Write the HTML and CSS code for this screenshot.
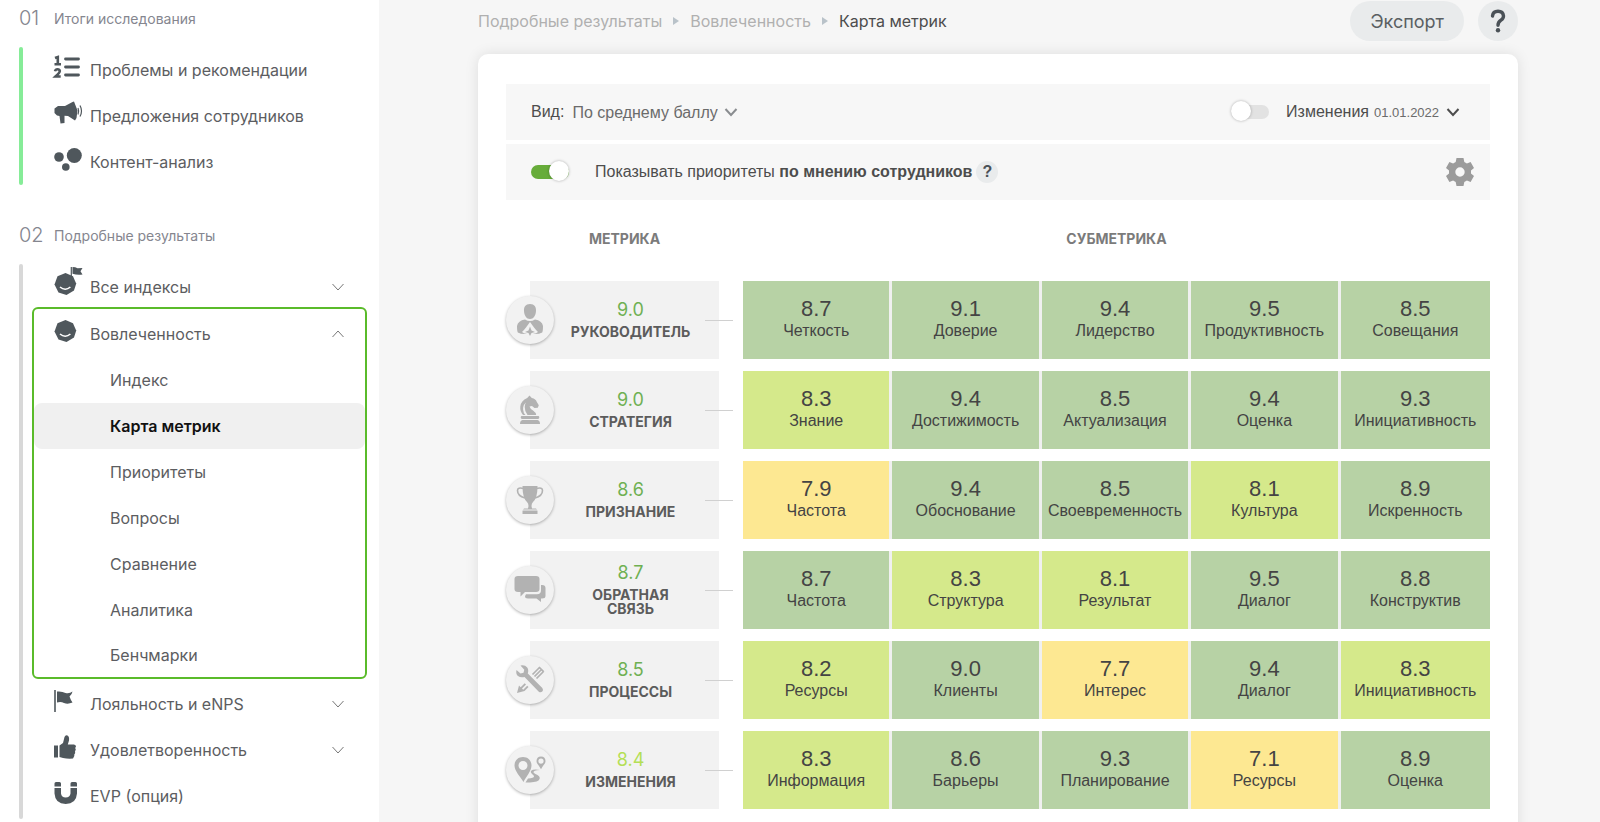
FILE: index.html
```html
<!DOCTYPE html>
<html lang="ru">
<head>
<meta charset="utf-8">
<meta name="viewport" content="width=device-width, initial-scale=1">
<title>Карта метрик</title>
<link rel="stylesheet" href="styles.css">
</head>
<body>
<svg class="defs" aria-hidden="true">
  <symbol id="chev" viewBox="0 0 14 14"><path d="M1.500 4l5.500 6 5.500-6" fill="none" stroke="currentColor"/></symbol>
  <symbol id="face" viewBox="0 0 28 28"><path d="M11.500 3l7.500 3.200 3.200 7.300-2.200 7-7.500 4.500-8-2.500L.5 14.500 3.500 6.200z" fill="currentColor"/><path d="M6 17q5.200 4.500 10.400 0" fill="none" stroke="#fff" stroke-width="1.600"/></symbol>
</svg>
<div class="app">
  <nav class="sidebar" aria-label="Разделы">
    <h2 class="group-title"><span class="group-no">01</span>Итоги исследования</h2>
    <div class="group">
      <div class="bar bar-green"></div>
      <div class="items">
        <a class="item" href="#"><svg class="icon" viewBox="0 0 28 28"><g stroke="currentColor" stroke-width="2.800" stroke-linecap="round"><path d="M11.500 6h13M11.500 14h13M11.500 22h13"/></g><g fill="none" stroke="currentColor" stroke-width="2.600"><path d="M1 5l2.800-1v7.500M.5 11.300h6.500"/><path d="M1 18.200q.5-2 2.500-2t2.300 1.700q0 1.500-4.300 5.600h5.200"/></g></svg>Проблемы и рекомендации</a>
        <a class="item" href="#"><svg class="icon" viewBox="0 0 28 28"><path d="M4 7h7l7.500-4 1.500-.5 3.500 9-1 7.500-1.500 2.500-7-4.500-3.500-.3V24l-4 .5L5.500 17 3 16.500.5 14V9.500z" fill="currentColor"/><path d="M24 9q1.300 3 0 6.500M26 6.500q3 5.500 0 11" fill="none" stroke="currentColor" stroke-width="1.200"/></svg>Предложения сотрудников</a>
        <a class="item" href="#"><svg class="icon" viewBox="0 0 28 28"><g fill="currentColor"><circle cx="5" cy="12" r="4.800"/><circle cx="20.300" cy="10.500" r="7.500"/><circle cx="11.800" cy="22" r="3.800"/></g></svg>Контент-анализ</a>
      </div>
    </div>
    <h2 class="group-title group-title-next"><span class="group-no">02</span>Подробные результаты</h2>
    <div class="group">
      <div class="bar"></div>
      <div class="items">
        <button class="item" type="button"><svg class="icon" viewBox="0 0 28 28"><use href="#face"/><path d="M17.300-3v10" stroke="currentColor" stroke-width="1.200"/><path d="M18.500-3q3 0 5 1.200l5-.2-2 3.200 2 3.300q-5 1-10-.8z" fill="currentColor"/></svg>Все индексы<svg class="chev"><use href="#chev"/></svg></button>
        <div class="open-group">
          <button class="item" type="button" aria-expanded="true"><svg class="icon" viewBox="0 0 28 28"><use href="#face"/></svg>Вовлеченность<svg class="chev chev-up"><use href="#chev"/></svg></button>
          <a class="sub" href="#">Индекс</a>
          <a class="sub sub-active" href="#" aria-current="page">Карта метрик</a>
          <a class="sub" href="#">Приоритеты</a>
          <a class="sub" href="#">Вопросы</a>
          <a class="sub" href="#">Сравнение</a>
          <a class="sub" href="#">Аналитика</a>
          <a class="sub" href="#">Бенчмарки</a>
        </div>
        <button class="item" type="button"><svg class="icon" viewBox="0 0 28 28"><path d="M1 3v22" stroke="currentColor" stroke-width="1.600"/><path d="M3 4.500q5-.5 8.500 1.500 4 1 7-1.500-.5 3-3 5 1 3 3 6-4.500 2-8.500.5-3-1.500-7-.5z" fill="currentColor"/></svg>Лояльность и eNPS<svg class="chev"><use href="#chev"/></svg></button>
        <button class="item" type="button"><svg class="icon" viewBox="0 0 28 28"><path d="M0 12.500h4v12H0zM5.500 12.500l3.500-2.500 1.500-6q1-2.500 3-1.500t1.500 5l-1.200 4H20q2 .5 2 2l-.8 1.500.6 1.500-.8 2 .2 1.500-.9 1.500v1.500l-1.300 2.500q-5 .5-10-.5l-3.500-1z" fill="currentColor"/></svg>Удовлетворенность<svg class="chev"><use href="#chev"/></svg></button>
        <a class="item" href="#"><svg class="icon" viewBox="0 0 28 28"><path d="M.5 4.500Q.5 3 2 3h3.500Q7 3 7 4.500v3H.5zM16.500 4.500q0-1.500 1.500-1.500h3.500Q23 3 23 4.500v3h-6.500zM.5 9H7v5.500q.5 4 4.700 4t4.800-4V9H23v5.500q-.8 10.500-11.300 10.500T.5 14.500z" fill="currentColor"/></svg>EVP (опция)</a>
      </div>
    </div>
  </nav>

  <main class="main">
    <header class="top">
      <nav class="crumbs" aria-label="Путь">
        <a href="#">Подробные результаты</a><svg class="crumb-arrow" viewBox="0 0 6 10"><path d="M0 1l6 4-6 4z" fill="#b9c2c9"/></svg>
        <a href="#">Вовлеченность</a><svg class="crumb-arrow" viewBox="0 0 6 10"><path d="M0 1l6 4-6 4z" fill="#b9c2c9"/></svg>
        <span class="crumb-now">Карта метрик</span>
      </nav>
      <button class="export" type="button">Экспорт</button>
      <button class="help" type="button" aria-label="Помощь"><svg viewBox="0 0 16 24"><path d="M2.500 7Q3 2.200 8 2.200T13.500 7q0 2.500-2.500 4.200-3 2-3 5" fill="none" stroke="currentColor" stroke-width="3.400" stroke-linecap="round"/><circle cx="8" cy="21.300" r="2.200" fill="currentColor"/></svg></button>
    </header>

    <section class="card">
      <div class="tool">
        <label class="view-label" for="view">Вид:</label>
        <span class="pick"><select id="view"><option>По среднему баллу</option></select><svg class="pick-chev pick-chev-soft"><use href="#chev"/></svg></span>
        <input class="switch push" type="checkbox" id="changes">
        <label class="changes-label" for="changes">Изменения</label>
        <span class="pick pick-date"><select aria-label="Дата"><option>01.01.2022</option></select><svg class="pick-chev"><use href="#chev"/></svg></span>
      </div>
      <div class="tool">
        <input class="switch" type="checkbox" id="prio" checked>
        <label class="prio-label" for="prio">Показывать приоритеты <b>по мнению сотрудников</b></label>
        <button class="hint" type="button">?</button>
        <button class="gear push" type="button" aria-label="Настройки"><svg viewBox="0 0 28 28"><path fill="currentColor" fill-rule="evenodd" d="M10.500 0h7l.8 4 2.600 1.500L24.600 4 28 10l-3 2.600v2.800L28 18l-3.400 6-3.700-1.500-2.600 1.500-.8 4h-7l-.8-4-2.600-1.500L3.400 24 0 18l3-2.600v-2.800L0 10l3.400-6 3.700 1.500L9.700 4zM14 9.300a4.700 4.700 0 1 0 0 9.400 4.700 4.700 0 0 0 0-9.400z"/></svg></button>
      </div>

      <table class="map">
        <colgroup><col class="col-metric"><col><col><col><col><col></colgroup>
        <thead><tr><th scope="col">МЕТРИКА</th><th scope="colgroup" colspan="5">СУБМЕТРИКА</th></tr></thead>
        <tbody>
          <tr>
            <th scope="row"><div class="metric"><span class="badge"><svg viewBox="0 0 32 32"><path fill="currentColor" d="M16 0c4.500 0 6.300 3 6 7-.3 4.500-2.500 8-6 8s-5.700-3.500-6-8c-.3-4 1.500-7 6-7zM11 15.500q5 3 10 0 7 1 8 6.500 0 5-.8 6.500-3 1.800-9.200 1.500 3.500-.5 5-2-2.500-2.500-4-4.500L16 18l-4 5.500Q10.500 25.500 8 28q1.500 1.500 5 2-6.200.3-9.200-1.500Q3 27 3 22q1-5.500 8-6.500zM16 22.500l1.500 4 3.500 1.500-3.500 1-1.500 3-1.500-3-3.500-1 3.500-1.500z"/></svg></span><span class="score">9.0</span>РУКОВОДИТЕЛЬ</div></th>
            <td class="g"><b>8.7</b>Четкость</td><td class="g"><b>9.1</b>Доверие</td><td class="g"><b>9.4</b>Лидерство</td><td class="g"><b>9.5</b>Продуктивность</td><td class="g"><b>8.5</b>Совещания</td>
          </tr>
          <tr>
            <th scope="row"><div class="metric"><span class="badge"><svg viewBox="0 0 32 32"><path fill="currentColor" d="M15.500 1.500l2.300 2.500q4 .8 5 4l2 3.200-1 2.500-3.300.3-2.500-2-2.500.5q.5 2 3.500 4t3.200 4.500H13.500q-3-4.500-2.800-8 .1-3 1.300-4.500-3.200 2.500-2.900 7 .2 3.500 2.400 5.500H9Q5.800 17 6.300 12.500 7 6.500 13.200 4zM7.500 22h17q.8.300.8 1.400t-1.300 1.500H8q-1.300-.3-1.300-1.500T7.500 22zM8.500 26h15q2.500.7 2.500 4H6q0-3.300 2.500-4z"/></svg></span><span class="score">9.0</span>СТРАТЕГИЯ</div></th>
            <td class="l"><b>8.3</b>Знание</td><td class="g"><b>9.4</b>Достижимость</td><td class="g"><b>8.5</b>Актуализация</td><td class="g"><b>9.4</b>Оценка</td><td class="g"><b>9.3</b>Инициативность</td>
          </tr>
          <tr>
            <th scope="row"><div class="metric"><span class="badge"><svg viewBox="0 0 32 32"><path fill="currentColor" d="M8.500 2h15q0 12-4.500 16-1.500 1.500-1.500 4l.5 2.500H22l1.500 2V30h-15v-3.500l1.500-2h4l.5-2.500q0-2.500-1.500-4Q8.500 14 8.500 2z"/><path fill="#f2f2f2" d="M8 25.500h16v1H8z"/><path fill="none" stroke="currentColor" stroke-width="1.600" d="M9.500 4.500Q3.500 3 3.500 6.500 3.500 12 11 14M22.500 4.500q6-1.500 6 2Q28.500 12 21 14"/></svg></span><span class="score">8.6</span>ПРИЗНАНИЕ</div></th>
            <td class="y"><b>7.9</b>Частота</td><td class="g"><b>9.4</b>Обоснование</td><td class="g"><b>8.5</b>Своевременность</td><td class="l"><b>8.1</b>Культура</td><td class="g"><b>8.9</b>Искренность</td>
          </tr>
          <tr>
            <th scope="row"><div class="metric"><span class="badge"><svg viewBox="0 0 32 32"><path fill="currentColor" d="M4 2h18q3.500 0 3.500 3v10q0 3-3.500 3H11l-4.500 4.500V18H4q-3.500 0-3.500-3V5Q.5 2 4 2zM27 11q4.500-.5 4.500 3v8q0 2.500-3.500 2.500h-1V28l-4.500-3.500H14q-3 0-3-2.200l1-2h11q4 0 4-4z"/></svg></span><span class="score">8.7</span>ОБРАТНАЯ<br>СВЯЗЬ</div></th>
            <td class="g"><b>8.7</b>Частота</td><td class="l"><b>8.3</b>Структура</td><td class="l"><b>8.1</b>Результат</td><td class="g"><b>9.5</b>Диалог</td><td class="g"><b>8.8</b>Конструктив</td>
          </tr>
          <tr>
            <th scope="row"><div class="metric"><span class="badge"><svg viewBox="0 0 32 32"><path fill="none" stroke="currentColor" stroke-width="1.700" d="M18.500 10.500l7-7M20.500 12.500l7-7M22.500 14.500l7-7M25 3l4.800 4.800"/><path fill="currentColor" d="M5 21.500L3 29l7.500-2 4-4-1.300-1.300-4 4-1.200-1.200 4-4-1.300-1.200-4 4z"/><path fill="currentColor" d="M6.500 1.500q4.500-.8 6.500 1.700t.8 6.300l14.500 14.500q1.500 2 0 3.500t-3.500.3L10.500 13Q6.500 14 4 12T2.500 6l4 3.500 3-.8.8-3z"/></svg></span><span class="score">8.5</span>ПРОЦЕССЫ</div></th>
            <td class="l"><b>8.2</b>Ресурсы</td><td class="g"><b>9.0</b>Клиенты</td><td class="y"><b>7.7</b>Интерес</td><td class="g"><b>9.4</b>Диалог</td><td class="l"><b>8.3</b>Инициативность</td>
          </tr>
          <tr>
            <th scope="row"><div class="metric"><span class="badge"><svg viewBox="0 0 32 32"><path fill="currentColor" fill-rule="evenodd" d="M9 3c5 0 8.500 3.500 8.500 8.500C17.500 17 12 23 9.500 28 6.500 23 .5 17 .5 11.500.5 6.500 4 3 9 3zM9 7a4.500 4.500 0 1 0 0 9 4.500 4.500 0 0 0 0-9zM27 2.500c3 0 4.500 2 4.500 4.700 0 2.500-3 4.800-4.500 8-1.500-3.200-4.500-5.500-4.500-8 0-2.700 1.500-4.700 4.500-4.700zM27 4.500a2.600 2.600 0 1 0 0 5.200 2.600 2.600 0 0 0 0-5.200z"/><path fill="currentColor" d="M26 16q-7 0-6.500 2.500 1 1 4 2.500 4 2.500 1 5.500-3 2-13 2l2.500-4q6-.5 6-2t-2-2.500q-3-3 1-4.200 3-.5 7 .2z"/></svg></span><span class="score score-lime">8.4</span>ИЗМЕНЕНИЯ</div></th>
            <td class="l"><b>8.3</b>Информация</td><td class="g"><b>8.6</b>Барьеры</td><td class="g"><b>9.3</b>Планирование</td><td class="y"><b>7.1</b>Ресурсы</td><td class="g"><b>8.9</b>Оценка</td>
          </tr>
        </tbody>
      </table>
    </section>
  </main>
</div>
</body>
</html>
```
FILE: styles.css
```css
* { box-sizing: border-box; }
body {
  margin: 0;
  background: #f6f6f6;
  color: #4d4d4d;
  font-family: "Liberation Sans", Arial, sans-serif;
  font-size: 16px;
}
button, select { font: inherit; color: inherit; border: 0; background: none; padding: 0; margin: 0; }
a { color: inherit; text-decoration: none; }
.defs { display: none; }

.app { display: grid; grid-template-columns: 379px 1fr; height: 100vh; }
.sidebar, .main { overflow: auto; scrollbar-width: none; }

.sidebar {
  background: #fff;
  padding: 5px 12px 0 19px;
  font-family: Inter, "Noto Sans", sans-serif;
  color: #5c5d61;
}
.group-title {
  display: flex;
  align-items: center;
  height: 26px;
  margin: 0 0 16px;
  font-size: 14px;
  font-weight: 400;
  color: #85868f;
}
.group-title-next { margin-top: 37px; }
.group-no { width: 35px; font-size: 20px; font-weight: 300; }
.group { display: flex; gap: 9px; }
.bar { width: 4px; border-radius: 2px; background: #d8d8d8; }
.bar-green { background: #86ec98; }
.items { flex: 1; }
.item {
  display: flex;
  align-items: center;
  width: 100%;
  height: 46px;
  padding: 0 22px;
  font-size: 16px;
  text-align: left;
}
.icon { width: 28px; height: 28px; margin: 0 8px 6px 0; color: #4f575c; overflow: visible; }
.chev { width: 14px; height: 14px; margin-left: auto; color: #777; }
.chev-up { transform: rotate(180deg); }
.open-group {
  margin: -3px 0 2px;
  padding-top: 2px;
  border: 2px solid #5abb2a;
  border-radius: 6px;
}
.open-group .item { padding: 0 20px; }
.sub {
  display: flex;
  align-items: center;
  height: 46px;
  padding: 0 76px;
  border-radius: 8px;
  font-size: 16px;
}
.sub:last-child { height: 44px; }
.sub-active { background: #f0f0f0; color: #111; font-weight: 600; }

.main { padding: 1px 82px 0 99px; }
.top { display: flex; align-items: center; height: 40px; font-family: Inter, "Noto Sans", sans-serif; }
.crumbs { display: flex; align-items: center; gap: 11px; margin-right: auto; font-size: 16px; color: #b0b0b0; }
.crumb-arrow { width: 6px; height: 10px; }
.crumb-now { color: #4d4d4d; }
.export { height: 40px; padding: 0 20px; border-radius: 20px; background: #e9ebec; font-size: 18px; color: #5a5f63; }
.help {
  display: flex; align-items: center; justify-content: center;
  width: 40px; height: 40px; margin-left: 14px;
  border-radius: 50%; background: #e9ebec; color: #4a5157;
}
.help svg { width: 16px; height: 24px; }

.card {
  margin-top: 13px;
  padding: 30px 28px 28px;
  border-radius: 10px;
  background: #fff;
  box-shadow: 0 0 14px rgba(0, 0, 0, .1);
}
.tool {
  display: flex;
  align-items: center;
  height: 56px;
  margin-bottom: 4px;
  padding: 0 30px 0 25px;
  background: #f7f7f7;
}
.tool + .tool { padding-right: 16px; margin-bottom: 0; }
.push { margin-left: auto; }
.view-label { margin-right: 8px; }
.pick { position: relative; display: flex; align-items: center; color: #6b6b6b; }
.pick select { appearance: none; padding-right: 20px; }
.pick-date select { font-size: 13px; }
.pick-chev { position: absolute; right: 0; width: 14px; height: 14px; color: #4d4d4d; stroke-width: 2; pointer-events: none; }
.pick-chev-soft { color: #8a8d90; }
.changes-label { margin: 0 5px 0 17px; }
.switch {
  appearance: none;
  position: relative;
  width: 38px;
  height: 14px;
  border-radius: 7px;
  background: #e2e2e2;
}
.switch.push { margin: 0 0 0 auto; }
.switch:not(.push) { margin: 0; }
.switch::before {
  content: "";
  position: absolute;
  top: -4px;
  left: 0;
  width: 20px;
  height: 20px;
  border-radius: 50%;
  background: #fff;
  box-shadow: 0 0 3px rgba(0, 0, 0, .3);
}
.switch:checked { background: #67ac3a; }
.switch:checked::before { left: 18px; }
.prio-label { margin-left: 26px; }
.hint {
  width: 22px; height: 22px; margin-left: 4px;
  border-radius: 50%; background: #e9ebec;
  font-weight: 700; color: #4a5157;
}
.gear { width: 28px; height: 28px; color: #9b9b9b; }
.gear svg { display: block; width: 28px; height: 28px; }

.map {
  width: 100%;
  table-layout: fixed;
  border-collapse: separate;
  border-spacing: 0 12px;
}
.col-metric { width: 237px; }
.map th, .map td { padding: 0; text-align: center; font-weight: 400; }
.map thead th {
  height: 57px;
  padding-bottom: 4px;
  font: 700 14px/16px Inter, "Noto Sans", sans-serif;
  color: #7b7b7b;
}
.metric {
  position: relative;
  display: flex;
  flex-direction: column;
  justify-content: center;
  height: 78px;
  margin: 0 24px;
  padding: 0 0 2px 12px;
  background: #f2f2f2;
  font: 700 14px/14px Inter, "Noto Sans", sans-serif;
  color: #5c5c5c;
}
.metric::after {
  content: "";
  position: absolute;
  right: -14px;
  top: 39px;
  width: 28px;
  height: 1px;
  background: #d0d0d0;
}
.badge {
  position: absolute;
  left: -24px;
  top: 15px;
  display: flex; align-items: center; justify-content: center;
  width: 48px; height: 48px;
  border-radius: 50%;
  background: #f2f2f2;
  color: #b2b2b2;
  box-shadow: 0 1px 3px rgba(0, 0, 0, .3);
}
.badge svg { width: 32px; height: 32px; }
.score { margin-bottom: 4px; font-size: 18px; line-height: 22px; font-weight: 400; color: #6fb052; }
.score-lime { color: #b4df55; }
.map td { height: 78px; border-right: 3px solid #f0f0f0; line-height: 20px; color: #444; vertical-align: middle; padding-bottom: 2px; }
.map td:last-child { border-right: 0; }
.map td b { display: block; font-size: 22px; line-height: 24px; font-weight: 400; }
.g { background: #b7d2a5; }
.l { background: #d5e98b; }
.y { background: #fde892; }
```
